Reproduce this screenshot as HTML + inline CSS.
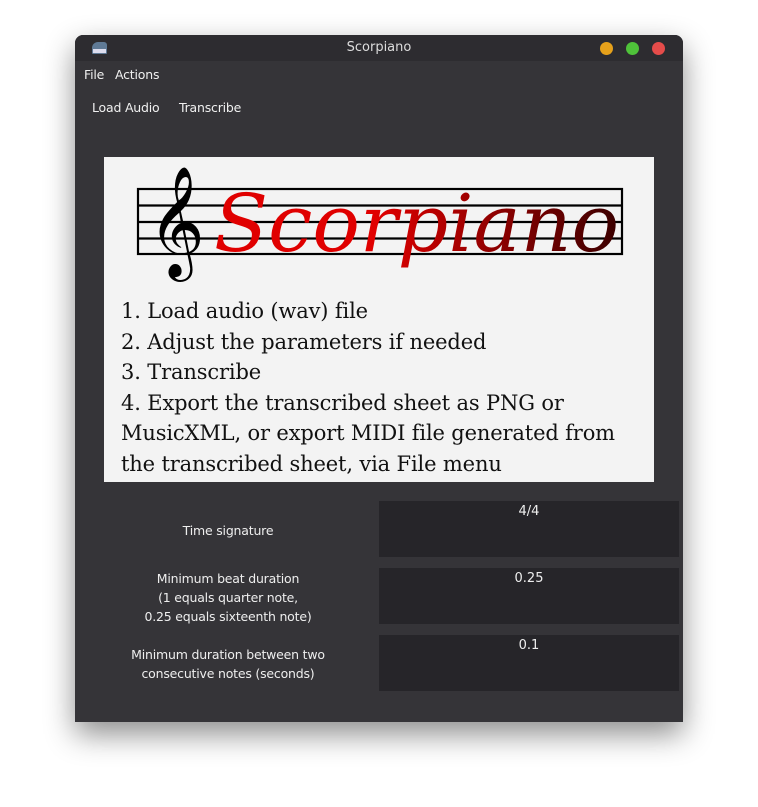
<!DOCTYPE html>
<html><head><style>
body{margin:0;width:758px;height:807px;background:#fff;position:relative;overflow:hidden;font-family:"DejaVu Sans","Liberation Sans",sans-serif}
.win{position:absolute;left:75px;top:35px;width:608px;height:687px;background:#353438;border-radius:8px 8px 0 0;box-shadow:0 12px 30px rgba(0,0,0,.45);overflow:hidden}
.tb{position:absolute;left:0;top:0;width:608px;height:26px;background:#2d2c30;color:#ddd;font-size:13px;text-align:center;line-height:26px}
.dot{position:absolute;top:7px;width:13px;height:13px;border-radius:50%}
.t{position:absolute;color:#f0f0f0;font-size:12.5px;white-space:nowrap;letter-spacing:-0.2px}
.f{position:absolute;left:304px;width:300px;height:56px;background:#262529;color:#eee;font-size:13px;text-align:center;line-height:22px}
.l{position:absolute;left:0;width:306px;text-align:center;color:#eee;font-size:12.5px;line-height:19px;letter-spacing:-0.2px}
.card{position:absolute;left:29px;top:122px;width:550px;height:325px;background:#f3f3f3}
.ins{position:absolute;left:17px;top:139px;font-family:"DejaVu Serif","Liberation Serif",serif;font-size:21px;line-height:30.5px;color:#111;white-space:nowrap;letter-spacing:-0.15px}
</style></head><body>
<div class="win">
<div class="tb">Scorpiano
<div style="position:absolute;left:17px;top:7px;width:15px;height:12px;background:#5f7a96;border-radius:6px 3px 1px 1px"></div>
<div style="position:absolute;left:18px;top:14px;width:13px;height:4px;background:#dde"></div>
<div class="dot" style="left:525px;background:#e6a11b"></div>
<div class="dot" style="left:551px;background:#4fc23a"></div>
<div class="dot" style="left:577px;background:#e54c4a"></div>
</div>
<div class="t" style="left:9px;top:32px">File</div>
<div class="t" style="left:40px;top:32px">Actions</div>
<div class="t" style="left:17px;top:65px">Load Audio</div>
<div class="t" style="left:104px;top:65px">Transcribe</div>
<div class="card">
<svg width="550" height="135" style="position:absolute;left:0;top:0">
<defs><linearGradient id="g" x1="0" x2="1"><stop offset="0" stop-color="#e00000"/><stop offset="0.4" stop-color="#e00000"/><stop offset="1" stop-color="#3a0000"/></linearGradient></defs>
<g stroke="#000" stroke-width="2.2" fill="none">
<rect x="34" y="32" width="484" height="65"/>
<line x1="34" y1="48.5" x2="518" y2="48.5"/><line x1="34" y1="65" x2="518" y2="65"/><line x1="34" y1="81.5" x2="518" y2="81.5"/>
</g>
<text x="44" y="97" font-family="DejaVu Serif,serif" font-size="96" fill="#000">𝄞</text>
<text x="110" y="94" font-family="DejaVu Serif,serif" font-style="italic" font-size="80" fill="url(#g)" textLength="405" lengthAdjust="spacingAndGlyphs">Scorpiano</text>
</svg>
<div class="ins">1. Load audio (wav) file<br>2. Adjust the parameters if needed<br>3. Transcribe<br>4. Export the transcribed sheet as PNG or<br>MusicXML, or export MIDI file generated from<br>the transcribed sheet, via File menu</div>
</div>
<div class="l" style="top:486px">Time signature</div>
<div class="f" style="top:466px">4/4</div>
<div class="l" style="top:534px">Minimum beat duration<br>(1 equals quarter note,<br>0.25 equals sixteenth note)</div>
<div class="f" style="top:533px">0.25</div>
<div class="l" style="top:610px">Minimum duration between two<br>consecutive notes (seconds)</div>
<div class="f" style="top:600px">0.1</div>
</div>
</body></html>
